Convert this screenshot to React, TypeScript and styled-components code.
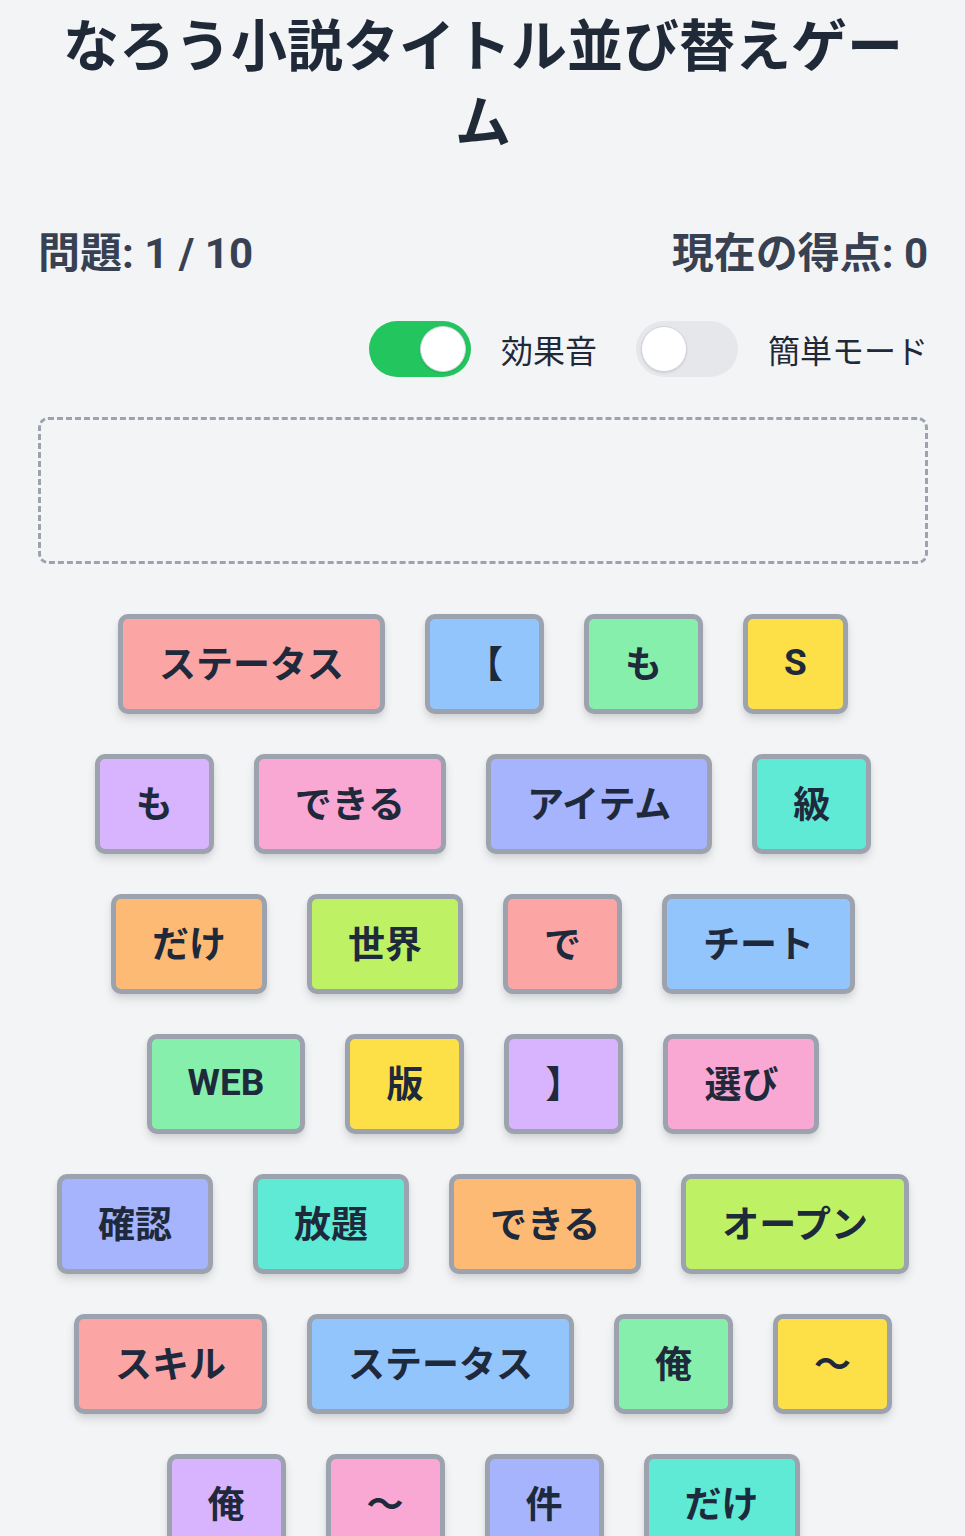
import React, { useState } from 'react';
import styled, { createGlobalStyle } from 'styled-components';

const GlobalStyle = createGlobalStyle`
  html, body {
    margin: 0;
    padding: 0;
    background: #f3f4f6;
  }
  body {
    font-family: Roboto, "Noto Sans CJK JP", "Noto Sans", sans-serif;
    color: #1f2937;
  }
`;

const Page = styled.main`
  box-sizing: border-box;
  width: 965px;
  padding: 9px 37px 40px 38px;
`;

const Title = styled.h1`
  margin: 0;
  font-size: 56px;
  line-height: 76px;
  font-weight: 700;
  text-align: center;
  color: #1f2937;
`;

const StatsBar = styled.div`
  display: flex;
  justify-content: space-between;
  align-items: center;
  margin-top: 58px;
  height: 60px;
  font-size: 42px;
  font-weight: 700;
  color: #374151;
`;

const OptionsBar = styled.div`
  display: flex;
  justify-content: flex-end;
  align-items: center;
  gap: 39px;
  margin-top: 42px;
`;

const Option = styled.label`
  display: flex;
  align-items: center;
  gap: 30px;
  font-size: 32px;
  color: #1f2937;
  cursor: pointer;
`;

const Track = styled.span<{ $on: boolean }>`
  position: relative;
  display: inline-block;
  width: 102px;
  height: 56px;
  border-radius: 28px;
  background: ${(p) => (p.$on ? '#22c55e' : '#e5e7eb')};
`;

const Knob = styled.span<{ $on: boolean }>`
  position: absolute;
  top: 5px;
  left: ${(p) => (p.$on ? '51px' : '5px')};
  width: 46px;
  height: 46px;
  box-sizing: border-box;
  border-radius: 50%;
  background: #ffffff;
  border: 1px solid #d1d5db;
  box-shadow: 0 1px 2px rgba(0, 0, 0, 0.12);
`;

const AnswerBox = styled.div`
  margin-top: 40px;
  height: 147px;
  box-sizing: border-box;
  border: 3px dashed #9ca3af;
  border-radius: 10px;
`;

const Pool = styled.div`
  display: flex;
  flex-direction: column;
  gap: 40px;
  margin-top: 50px;
`;

const TileRow = styled.div`
  display: flex;
  justify-content: center;
  gap: 40px;
`;

const Tile = styled.button<{ $bg: string }>`
  box-sizing: border-box;
  display: inline-flex;
  align-items: center;
  justify-content: center;
  height: 100px;
  padding: 0 36px 4px;
  border: 5px solid #9ca3af;
  border-radius: 10px;
  background: ${(p) => p.$bg};
  box-shadow: 0 6px 10px rgba(0, 0, 0, 0.1), 0 2px 4px rgba(0, 0, 0, 0.06);
  font-family: Roboto, "Noto Sans CJK JP", sans-serif;
  font-size: 37px;
  font-weight: 700;
  color: #1e293b;
  white-space: nowrap;
  cursor: pointer;
`;

const palette = [
  '#fca5a5',
  '#93c5fd',
  '#86efac',
  '#fde047',
  '#d8b4fe',
  '#f9a8d4',
  '#a5b4fc',
  '#5eead4',
  '#fdba74',
  '#bef264',
];

const words = [
  'ステータス', '【', 'も', 'S',
  'も', 'できる', 'アイテム', '級',
  'だけ', '世界', 'で', 'チート',
  'WEB', '版', '】', '選び',
  '確認', '放題', 'できる', 'オープン',
  'スキル', 'ステータス', '俺', '～',
  '俺', '～', '件', 'だけ',
];

function Toggle({ on, onChange, label }: { on: boolean; onChange: () => void; label: string }) {
  return (
    <Option onClick={onChange}>
      <Track $on={on}>
        <Knob $on={on} />
      </Track>
      {label}
    </Option>
  );
}

export default function App() {
  const [sound, setSound] = useState(true);
  const [easy, setEasy] = useState(false);

  const rows: { word: string; index: number }[][] = [];
  words.forEach((word, index) => {
    const r = Math.floor(index / 4);
    if (!rows[r]) rows[r] = [];
    rows[r].push({ word, index });
  });

  return (
    <>
      <GlobalStyle />
      <Page>
        <Title>なろう小説タイトル並び替えゲーム</Title>
        <StatsBar>
          <span>問題: 1 / 10</span>
          <span>現在の得点: 0</span>
        </StatsBar>
        <OptionsBar>
          <Toggle on={sound} onChange={() => setSound(!sound)} label='効果音' />
          <Toggle on={easy} onChange={() => setEasy(!easy)} label='簡単モード' />
        </OptionsBar>
        <AnswerBox />
        <Pool>
          {rows.map((row, i) => (
            <TileRow key={i}>
              {row.map(({ word, index }) => (
                <Tile key={index} $bg={palette[index % palette.length]}>
                  {word}
                </Tile>
              ))}
            </TileRow>
          ))}
        </Pool>
      </Page>
    </>
  );
}
